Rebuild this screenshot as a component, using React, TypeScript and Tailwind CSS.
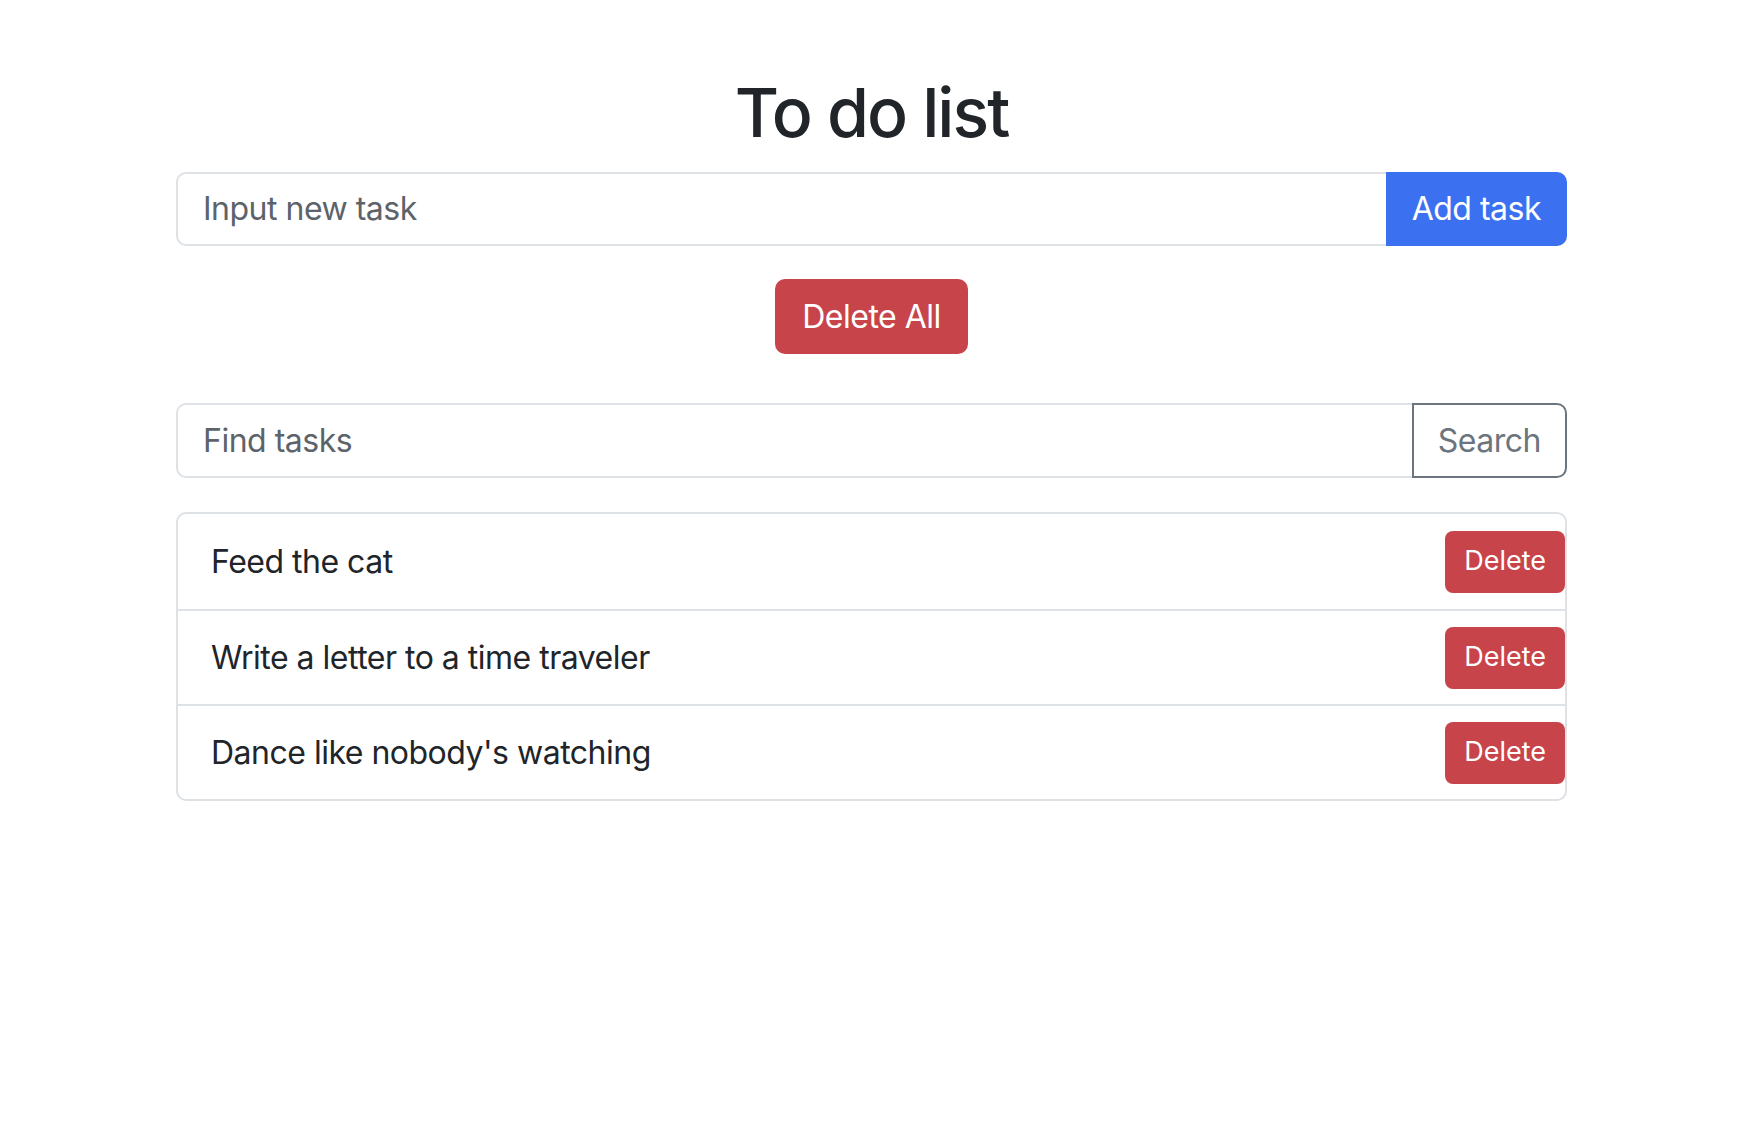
import { useState } from 'react';

const initialTasks = ['Feed the cat', 'Write a letter to a time traveler', "Dance like nobody's watching"];

export default function App() {
  const [tasks, setTasks] = useState(initialTasks);
  const [draft, setDraft] = useState('');
  const [query, setQuery] = useState('');

  const addTask = () => {
    if (!draft.trim()) return;
    setTasks([...tasks, draft.trim()]);
    setDraft('');
  };

  return (
    <div className="min-h-screen bg-white text-[#212529] font-['Inter',sans-serif] pt-[70px]">
      <div className="ml-[176px] w-[1391px] flex flex-col">
        {/* Title */}
        <h1 className="text-center text-[68px] leading-[84px] font-medium tracking-[-2px] mb-[18px]">
          To do list
        </h1>

        {/* New task */}
        <div className="flex h-[74px] tracking-[-0.5px]">
          <input
            value={draft}
            onChange={(e) => setDraft(e.target.value)}
            placeholder="Input new task"
            className="flex-1 min-w-0 border-2 border-r-0 border-[#dee2e6] rounded-l-[10px] px-[25px] text-[32px] outline-none placeholder:text-[#5c636a]"
          />
          <button
            onClick={addTask}
            className="bg-[#3b71f1] text-white text-[32px] px-[26px] rounded-r-[10px]"
          >
            Add task
          </button>
        </div>

        {/* Delete all */}
        <div className="flex justify-center mt-[33px] tracking-[-0.5px]">
          <button
            onClick={() => setTasks([])}
            className="h-[75px] px-[27px] bg-[#c8444b] text-white text-[32px] rounded-[10px]"
          >
            Delete All
          </button>
        </div>

        {/* Search */}
        <div className="flex h-[75px] mt-[49px] tracking-[-0.5px]">
          <input
            value={query}
            onChange={(e) => setQuery(e.target.value)}
            placeholder="Find tasks"
            className="flex-1 min-w-0 border-2 border-r-0 border-[#dee2e6] rounded-l-[10px] px-[25px] text-[32px] outline-none placeholder:text-[#5c636a]"
          />
          <button className="border-2 border-[#6c757d] text-[#6c757d] text-[32px] px-[24px] rounded-r-[10px]">
            Search
          </button>
        </div>

        {/* Task list */}
        <ul className="mt-[34px] border-2 border-[#dee2e6] rounded-[10px]">
          {tasks.map((task, i) => (
            <li
              key={task + i}
              className={`flex items-center justify-between h-[95px] pl-[33px] text-[32px] tracking-[-0.5px] ${
                i > 0 ? 'border-t-2 border-[#dee2e6]' : ''
              }`}
            >
              <span>{task}</span>
              <button
                onClick={() => setTasks(tasks.filter((_, j) => j !== i))}
                className="h-[62px] px-[19px] bg-[#c8444b] text-white text-[27px] tracking-normal rounded-[8px]"
              >
                Delete
              </button>
            </li>
          ))}
        </ul>
      </div>
    </div>
  );
}
